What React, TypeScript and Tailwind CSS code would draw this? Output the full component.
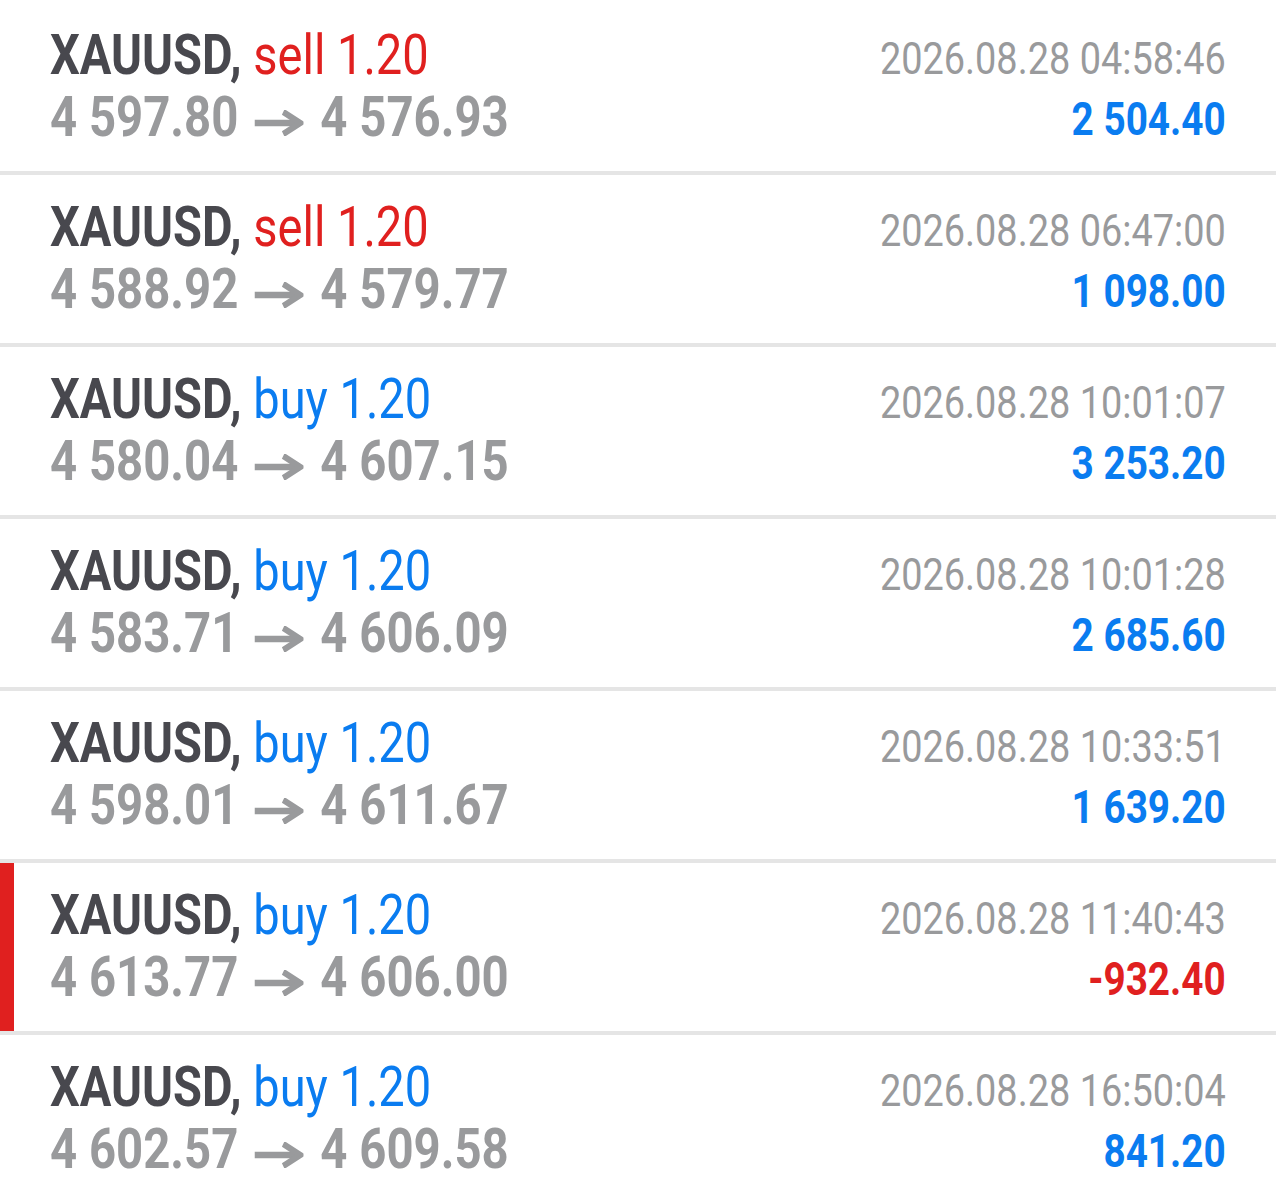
const trades = [
  { side: 'sell', open: '4 597.80', close: '4 576.93', time: '2026.08.28 04:58:46', profit: '2 504.40' },
  { side: 'sell', open: '4 588.92', close: '4 579.77', time: '2026.08.28 06:47:00', profit: '1 098.00' },
  { side: 'buy', open: '4 580.04', close: '4 607.15', time: '2026.08.28 10:01:07', profit: '3 253.20' },
  { side: 'buy', open: '4 583.71', close: '4 606.09', time: '2026.08.28 10:01:28', profit: '2 685.60' },
  { side: 'buy', open: '4 598.01', close: '4 611.67', time: '2026.08.28 10:33:51', profit: '1 639.20' },
  { side: 'buy', open: '4 613.77', close: '4 606.00', time: '2026.08.28 11:40:43', profit: '-932.40' },
  { side: 'buy', open: '4 602.57', close: '4 609.58', time: '2026.08.28 16:50:04', profit: '841.20' },
]

// Roboto Condensed isn't installed: lines are squeezed with scaleX instead
function Arrow() {
  return (
    <svg width="58" height="26" viewBox="0 0 58 26" className="ml-[19px] mr-[20px] mt-[12px] shrink-0">
      <path d="M0 13 H54" stroke="#999a9c" strokeWidth="6.5" fill="none" />
      <path d="M34 2 L54 13 L34 24" stroke="#999a9c" strokeWidth="6.5" fill="none" />
    </svg>
  )
}

export default function App() {
  return (
    <div className="w-[1276px] h-[1198px] overflow-hidden bg-white pt-[3px] font-['Roboto',sans-serif]">
      {trades.map((t, i) => {
        const loss = t.profit.startsWith('-')
        return (
          <div key={i} className="flex h-[172px] border-b-4 border-[#e5e5e5]">
            <div className={loss ? 'w-[14px] bg-[#e0201f]' : 'w-[14px]'} />
            <div className="flex flex-1 justify-between pl-[36px] pr-[50px]">
              <div className="flex flex-col">
                <div className="mt-[20px] h-[64px] origin-left [transform:scaleX(0.84)] text-[56px] leading-[64px] whitespace-nowrap">
                  <span className="font-bold text-[#48484e]">XAUUSD,</span>{' '}
                  <span className={t.side === 'sell' ? 'text-[#e0201f]' : 'text-[#0a7cf0]'}>
                    {t.side} 1.20
                  </span>
                </div>
                <div className="flex h-[60px] items-center origin-left [transform:scaleX(0.845)] text-[56px] leading-[60px] font-bold text-[#999a9c] whitespace-nowrap">
                  <span>{t.open}</span>
                  <Arrow />
                  <span>{t.close}</span>
                </div>
              </div>
              <div className="flex flex-col items-end origin-right [transform:scaleX(0.842)]">
                <div className="mt-[30px] text-[45px] leading-[52px] text-[#999a9c] whitespace-nowrap">
                  {t.time}
                </div>
                <div className={`mt-[4px] text-[46px] leading-[60px] font-bold whitespace-nowrap ${loss ? 'text-[#e0201f]' : 'text-[#0a7cf0]'}`}>
                  {t.profit}
                </div>
              </div>
            </div>
          </div>
        )
      })}
    </div>
  )
}
